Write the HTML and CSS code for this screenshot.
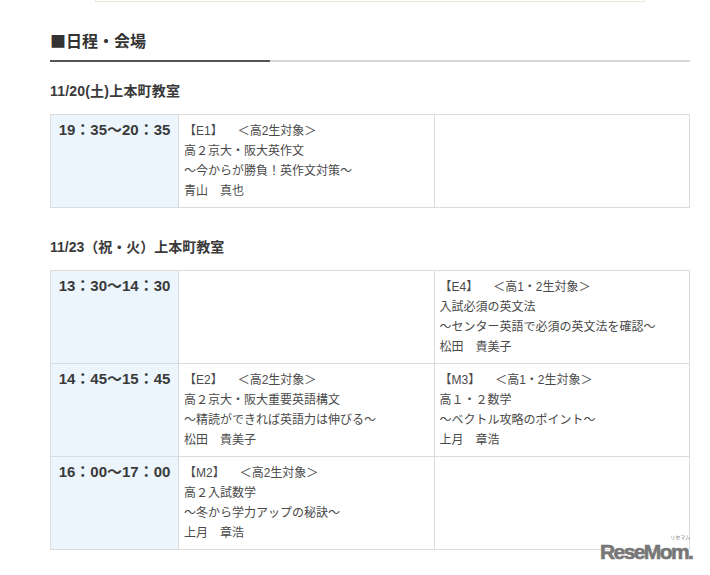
FILE: index.html
```html
<!DOCTYPE html>
<html lang="ja">
<head>
<meta charset="utf-8">
<title>日程・会場</title>
<link rel="stylesheet" href="styles.css">
</head>
<body>
<div class="page">
  <div class="notice"></div>
  <h2 class="heading">■日程・会場</h2>
  <h3 class="date">11/20(土)上本町教室</h3>
  <table class="schedule">
    <tr>
      <th>19：35～20：35</th>
      <td><span class="code">【E1】</span>　＜高2生対象＞<br>高２京大・阪大英作文<br>～今からが勝負！英作文対策～<br>青山　真也</td>
      <td></td>
    </tr>
  </table>
  <h3 class="date second">11/23（祝・火）上本町教室</h3>
  <table class="schedule">
    <tr>
      <th>13：30～14：30</th>
      <td></td>
      <td><span class="code">【E4】</span>　＜高1・2生対象＞<br>入試必須の英文法<br>～センター英語で必須の英文法を確認～<br>松田　貴美子</td>
    </tr>
    <tr>
      <th>14：45～15：45</th>
      <td><span class="code">【E2】</span>　＜高2生対象＞<br>高２京大・阪大重要英語構文<br>～精読ができれば英語力は伸びる～<br>松田　貴美子</td>
      <td><span class="code">【M3】</span>　＜高1・2生対象＞<br>高１・２数学<br>～ベクトル攻略のポイント～<br>上月　章浩</td>
    </tr>
    <tr>
      <th>16：00～17：00</th>
      <td><span class="code">【M2】</span>　＜高2生対象＞<br>高２入試数学<br>～冬から学力アップの秘訣～<br>上月　章浩</td>
      <td></td>
    </tr>
  </table>
  <div class="logo"><span class="kana">リセマム</span>ReseMom<span class="dot">.</span></div>
</div>
</body>
</html>
```
FILE: styles.css
```css
html, body {
  margin: 0;
  padding: 0;
  background: #fff;
}
body {
  width: 710px;
  height: 575px;
  overflow: hidden;
  font-family: "Liberation Sans", "Noto Sans CJK JP", sans-serif;
  color: #333;
}
.page {
  position: relative;
  height: 575px;
  padding: 0 20px 0 50px;
  box-sizing: border-box;
}
.notice {
  width: 548px;
  height: 1px;
  margin-left: 45px;
  margin-bottom: 28px;
  border-bottom: 1px solid #ebebd9;
  border-left: 1px solid #ebebd9;
  border-right: 1px solid #ebebd9;
}
.heading {
  position: relative;
  margin: 0;
  height: 30px;
  line-height: 20px;
  font-family: "Noto Sans CJK JP", sans-serif;
  font-size: 16px;
  font-weight: bold;
  color: #333;
  border-bottom: 2px solid #d8d8d8;
}
.heading::after {
  content: "";
  position: absolute;
  left: 0;
  bottom: -2px;
  width: 220px;
  height: 2px;
  background: #555;
}
.date {
  margin: 20px 0 14px;
  line-height: 18px;
  font-size: 14px;
  letter-spacing: 0.2px;
  font-weight: bold;
  color: #3a3a3a;
}
.date.second {
  margin-top: 30px;
  letter-spacing: 0;
}
.schedule {
  width: 640px;
  table-layout: fixed;
  border-collapse: collapse;
}
.schedule th,
.schedule td {
  border: 1px solid #dcdcdc;
  vertical-align: top;
  padding: 6px 5px;
  height: 80px;
  line-height: 20px;
  font-size: 12px;
  color: #4a4a4a;
  text-align: left;
}
.schedule th {
  width: 117px;
  padding: 5px;
  background: #ecf5fc;
  font-size: 15px;
  font-weight: bold;
  color: #3a3a3a;
  text-align: center;
  white-space: nowrap;
}
.schedule td + td + td {
  width: 244px;
}
.code {
  margin-right: 9px;
}
.logo {
  position: absolute;
  left: 600px;
  top: 544px;
  font-size: 21px;
  line-height: 16px;
  font-weight: bold;
  color: #777;
  letter-spacing: -1.6px;
  -webkit-text-stroke: 0.6px #777;
  white-space: nowrap;
}
.kana {
  position: absolute;
  right: 2px;
  top: -9px;
  font-size: 5px;
  line-height: 5px;
  letter-spacing: 0;
  font-weight: normal;
  -webkit-text-stroke: 0;
  color: #777;
}
```
